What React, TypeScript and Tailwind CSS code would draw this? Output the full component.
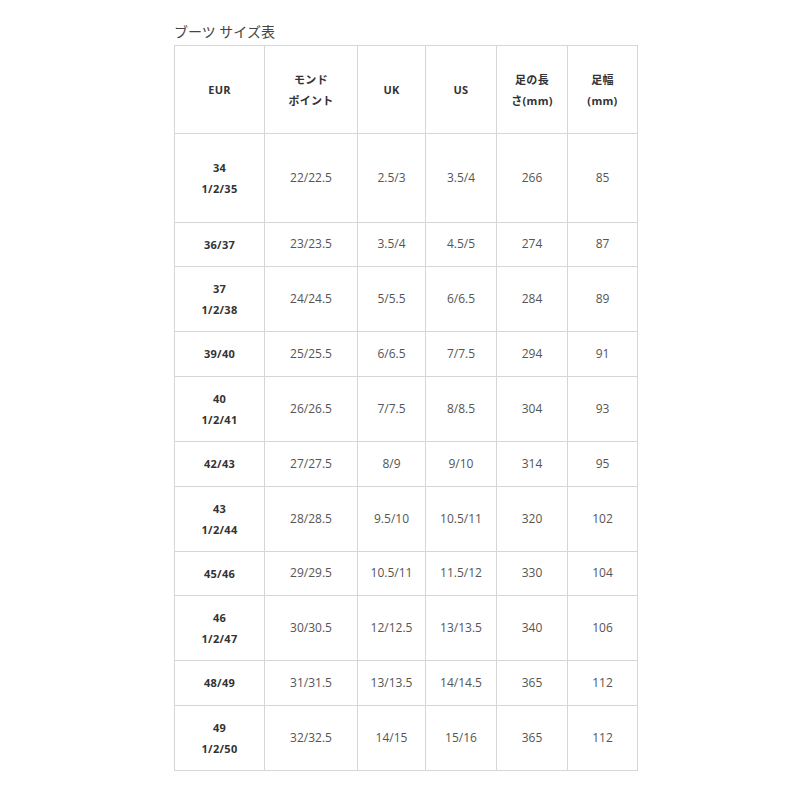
const headers: string[][] = [
  ["EUR"],
  ["モンド", "ポイント"],
  ["UK"],
  ["US"],
  ["足の長", "さ(mm)"],
  ["足幅", "(mm)"],
];

const widths = ["w-[90px]", "w-[93px]", "w-[68px]", "w-[71px]", "w-[71px]", "w-[70px]"];

interface Row {
  eur: string[];
  h: string;
  cells: string[];
}

const rows: Row[] = [
  { eur: ["34", "1/2/35"], h: "h-[89px]", cells: ["22/22.5", "2.5/3", "3.5/4", "266", "85"] },
  { eur: ["36/37"], h: "h-[44px]", cells: ["23/23.5", "3.5/4", "4.5/5", "274", "87"] },
  { eur: ["37", "1/2/38"], h: "h-[65px]", cells: ["24/24.5", "5/5.5", "6/6.5", "284", "89"] },
  { eur: ["39/40"], h: "h-[45px]", cells: ["25/25.5", "6/6.5", "7/7.5", "294", "91"] },
  { eur: ["40", "1/2/41"], h: "h-[65px]", cells: ["26/26.5", "7/7.5", "8/8.5", "304", "93"] },
  { eur: ["42/43"], h: "h-[45px]", cells: ["27/27.5", "8/9", "9/10", "314", "95"] },
  { eur: ["43", "1/2/44"], h: "h-[65px]", cells: ["28/28.5", "9.5/10", "10.5/11", "320", "102"] },
  { eur: ["45/46"], h: "h-[44px]", cells: ["29/29.5", "10.5/11", "11.5/12", "330", "104"] },
  { eur: ["46", "1/2/47"], h: "h-[65px]", cells: ["30/30.5", "12/12.5", "13/13.5", "340", "106"] },
  { eur: ["48/49"], h: "h-[45px]", cells: ["31/31.5", "13/13.5", "14/14.5", "365", "112"] },
  { eur: ["49", "1/2/50"], h: "h-[65px]", cells: ["32/32.5", "14/15", "15/16", "365", "112"] },
];

const font = { fontFamily: '"Open Sans", "Noto Sans CJK JP", sans-serif' };

export default function App() {
  return (
    <div className="min-h-[800px] bg-white pt-[22px] pl-[174px]" style={font}>
      {/* Title */}
      <h2 className="text-[14px] leading-[20px] text-[#444] mb-[3px] font-normal">ブーツ サイズ表</h2>

      <table className="table-fixed border-collapse text-center">
        <colgroup>
          {widths.map((w, i) => (
            <col key={i} className={w} />
          ))}
        </colgroup>
        <thead>
          <tr className="h-[88px]">
            {headers.map((lines, i) => (
              <th
                key={i}
                className="border border-[#d6d6d6] align-middle text-[11px] leading-[21px] font-bold text-[#333] tracking-[0.3px]"
              >
                {lines.map((l, j) => (
                  <div key={j}>{l}</div>
                ))}
              </th>
            ))}
          </tr>
        </thead>
        <tbody>
          {rows.map((r, i) => (
            <tr key={i} className={r.h}>
              <td className="border border-[#d6d6d6] align-middle text-[11px] leading-[21px] font-bold text-[#333] tracking-[0.3px] pb-[1px]">
                {r.eur.map((l, j) => (
                  <div key={j}>{l}</div>
                ))}
              </td>
              {r.cells.map((c, j) => (
                <td
                  key={j}
                  className="border border-[#d6d6d6] align-middle text-[12px] leading-[21px] text-[#555] pb-[2px]"
                >
                  {c}
                </td>
              ))}
            </tr>
          ))}
        </tbody>
      </table>
    </div>
  );
}
